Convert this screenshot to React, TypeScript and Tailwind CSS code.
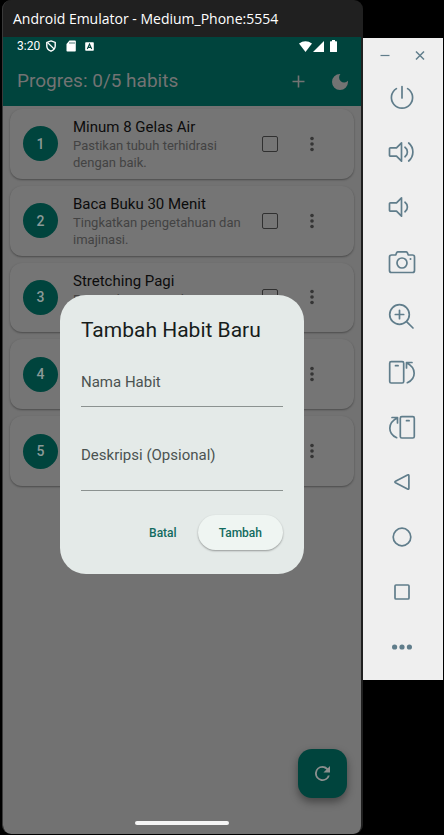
import type { ReactNode } from "react";

type Habit = { title?: string; description?: string };

const habits: Habit[] = [
  { title: "Minum 8 Gelas Air", description: "Pastikan tubuh terhidrasi dengan baik." },
  { title: "Baca Buku 30 Menit", description: "Tingkatkan pengetahuan dan imajinasi." },
  { title: "Stretching Pagi", description: "Regangkan otot selama" },
  {},
  {},
];

function StatusBar() {
  return (
    <div className="flex h-[18px] items-center pr-6 pl-[14px] text-xs text-white">
      <span className="w-[29px]">3:20</span>
      <svg className="h-3 w-[10px]" viewBox="0 0 10 12" fill="none" stroke="#fff" strokeWidth="1.4">
        <path d="M5 .9 9.2 2.4V6c0 2.500-1.700 4.200-4.200 5.200C2.500 10.200.8 8.500.8 6V2.400Z" />
        <path d="M1.500 2.500 8.200 9" strokeWidth="1.100" />
      </svg>
      <svg className="ml-[10px] h-3 w-[10px]" viewBox="0 0 10 12">
        <path d="M3.500 .5H9a.8.8 0 0 1 .8.8v9.400a.8.8 0 0 1-.8.8H1.300a.8.8 0 0 1-.8-.8V4Z" fill="#fff" />
        <path d="M4 2v2M6 2v2M8 2v2" stroke="#00443d" strokeWidth=".7" />
      </svg>
      <svg className="ml-[9px] h-[9px] w-[9px]" viewBox="0 0 9 9">
        <rect x=".2" y=".2" width="8.600" height="8.600" rx=".8" fill="#fff" />
        <path d="M2.300 7 4.500 2 6.700 7M3.200 5.400h2.600" fill="none" stroke="#00443d" strokeWidth="1.100" />
      </svg>
      <svg className="ml-auto h-[11px] w-[13px]" viewBox="0 0 13 11">
        <path d="M0 2.600C3.800-.7 9.200-.7 13 2.600L6.500 11Z" fill="#fff" />
      </svg>
      <svg className="ml-[1px] h-[11px] w-[11px]" viewBox="0 0 11 11">
        <path d="M11 0v11H0Z" fill="#fff" />
      </svg>
      <svg className="ml-[6px] h-3 w-[7px]" viewBox="0 0 7 12">
        <path d="M2 0h3v1.200h1.400a.6.6 0 0 1 .6.6v9.600a.6.6 0 0 1-.6.6H.6a.6.6 0 0 1-.6-.6V1.800a.6.6 0 0 1 .6-.6H2Z" fill="#fff" />
      </svg>
    </div>
  );
}

function AppBar() {
  return (
    <header className="flex h-[51px] items-center pt-[2px] pr-[11px] pl-[14px]">
      <h1 className="flex-1 text-[19px] text-[#737373]">Progres: 0/5 habits</h1>
      <button aria-label="Tambah habit" className="mr-5 flex h-6 w-6 items-center justify-center">
        <svg className="h-[13px] w-[13px]" viewBox="0 0 13 13" stroke="#737373" strokeWidth="1.600">
          <path d="M6.500 .5v12M.5 6.500h12" />
        </svg>
      </button>
      <button aria-label="Mode gelap" className="flex h-5 w-5 items-center justify-center">
        <svg className="h-4 w-4" viewBox="3 3 18 18" fill="#737373">
          <path d="M12 3a9 9 0 1 0 9 9c0-.46-.04-.92-.1-1.360A5.400 5.400 0 0 1 12.440 3.060 9.100 9.100 0 0 0 12 3Z" />
        </svg>
      </button>
    </header>
  );
}

function HabitCard({ habit, number }: { habit: Habit; number: number }) {
  return (
    <li className="flex items-center rounded-xl bg-[#757575] pr-[33px] pl-[13px] shadow-[0_1px_2px_rgba(0,0,0,0.35)]">
      <span className="flex h-[35px] w-[35px] shrink-0 items-center justify-center rounded-full bg-[#00443d] text-sm font-medium text-[#8b9a98]">
        {number}
      </span>
      <div className="ml-[15px] min-w-0 flex-1 self-start pt-2">
        {habit.title && <h2 className="text-[15px] leading-5 text-[#0c0c0c]">{habit.title}</h2>}
        {habit.description && <p className="text-[13px] leading-[17px] text-[#434343]">{habit.description}</p>}
      </div>
      <input
        type="checkbox"
        aria-label={`Habit ${number}`}
        className="mr-[25px] ml-3 h-4 w-4 shrink-0 appearance-none rounded-[2px] border border-[#303030]"
      />
      <button aria-label={`Menu habit ${number}`} className="flex h-6 w-[18px] shrink-0 items-center justify-center">
        <svg className="h-4 w-1" viewBox="0 0 4 16" fill="#353535">
          <circle cx="2" cy="2.500" r="1.800" />
          <circle cx="2" cy="8" r="1.800" />
          <circle cx="2" cy="13.500" r="1.800" />
        </svg>
      </button>
    </li>
  );
}

function AddHabitDialog() {
  return (
    <form
      role="dialog"
      aria-labelledby="dialog-title"
      className="absolute inset-x-[57px] top-[258px] rounded-[26px] bg-[#e4eae8] px-[21px] pt-[21px] pb-6"
    >
      <h2 id="dialog-title" className="text-[21px] leading-7 text-[#171d1b]">
        Tambah Habit Baru
      </h2>
      <div className="mt-[13px] grid">
        <label htmlFor="habit-name" className="col-start-1 row-start-1 self-center text-[15px] leading-5 text-[#4b5351]">
          Nama Habit
        </label>
        <input
          id="habit-name"
          className="col-start-1 row-start-1 h-[50px] w-full border-b border-[#8b9290] bg-transparent outline-none"
        />
      </div>
      <div className="mt-[14px] grid">
        <label htmlFor="habit-description" className="col-start-1 row-start-1 pt-6 text-[15px] leading-5 text-[#4b5351]">
          Deskripsi (Opsional)
        </label>
        <textarea
          id="habit-description"
          className="col-start-1 row-start-1 h-[70px] w-full resize-none border-b border-[#8b9290] bg-transparent outline-none"
        />
      </div>
      <div className="mt-6 flex justify-end gap-[9px] text-xs font-medium text-[#126b5f]">
        <button type="button" className="h-[35px] px-3">
          Batal
        </button>
        <button
          type="button"
          className="h-[35px] rounded-full bg-[#eff5f2] px-[21px] shadow-[0_1px_2px_rgba(0,0,0,0.35)]"
        >
          Tambah
        </button>
      </div>
    </form>
  );
}

function ToolButton({ label, children }: { label: string; children: ReactNode }) {
  return (
    <button aria-label={label} className="flex h-[55px] w-full items-center justify-center pr-[2px]">
      <svg
        className="h-7 w-7"
        viewBox="0 0 28 28"
        fill="none"
        stroke="#607d8b"
        strokeWidth="1.700"
        strokeLinejoin="round"
        strokeLinecap="round"
      >
        {children}
      </svg>
    </button>
  );
}

function EmulatorToolbar() {
  return (
    <aside className="mt-[38px] mr-px h-[642px] w-20 shrink-0 bg-[#efefef]">
      <div className="flex h-[31px] items-end justify-between pr-[15px] pl-[14px]">
        <button aria-label="Minimize" className="flex h-7 w-4 items-center justify-center">
          <svg className="h-3 w-3" viewBox="0 0 12 12" stroke="#607d8b" strokeWidth="1.200">
            <path d="M1.500 6.500h9" />
          </svg>
        </button>
        <button aria-label="Close" className="flex h-7 w-4 items-center justify-center">
          <svg className="h-3 w-3" viewBox="0 0 12 12" stroke="#607d8b" strokeWidth="1.500">
            <path d="m2 2.500 8 8m0-8-8 8" />
          </svg>
        </button>
      </div>
      <ToolButton label="Power">
        <path d="M14 3.500V15M8.400 5.600a10.600 10.600 0 1 0 11.200 0" />
      </ToolButton>
      <ToolButton label="Volume up">
        <path d="M2.500 9.800h6L13.500 4.800v18.400L8.500 18.200h-6a1 1 0 0 1-1-1v-6.400a1 1 0 0 1 1-1ZM17 9.200a6 6 0 0 1 0 9.600M20.700 5a11.800 11.800 0 0 1 0 18" />
      </ToolButton>
      <ToolButton label="Volume down">
        <path d="M2.500 9.800h6L13.500 4.800v18.400L8.500 18.200h-6a1 1 0 0 1-1-1v-6.400a1 1 0 0 1 1-1ZM17 9.200a6 6 0 0 1 0 9.600" />
      </ToolButton>
      <ToolButton label="Screenshot">
        <path d="M3.500 7h4.200l1-2.300c.3-.6.6-.9 1.200-.9h8.200c.6 0 .9.3 1.200.9l1 2.300h4.200a2 2 0 0 1 2 2v13.500a2 2 0 0 1-2 2h-21a2 2 0 0 1-2-2V9a2 2 0 0 1 2-2Z" />
        <circle cx="14" cy="15" r="5" />
        <path d="M22.500 11v.1" strokeWidth="2" />
      </ToolButton>
      <ToolButton label="Zoom">
        <circle cx="11.500" cy="11.500" r="9.800" />
        <path d="M11.500 7.300v8.400M7.300 11.500h8.400M18.800 18.800l6.200 6.200" />
      </ToolButton>
      <ToolButton label="Rotate left">
        <rect x="1.700" y="3.700" width="14" height="21.300" rx="1.500" />
        <path d="M7.500 7.700h2.600M18.500 10V4.500H24M19 5c9.500 5 9.500 15.500.3 19.700" />
      </ToolButton>
      <ToolButton label="Rotate right">
        <rect x="12.300" y="3.700" width="14" height="21.300" rx="1.500" />
        <path d="M18.500 7.700h2.600M9.500 10V4.500H4M9 5C-.5 10-.5 20.500 8.700 24.700" />
      </ToolButton>
      <ToolButton label="Back">
        <path d="m7.500 13.200 12-6.300c.8-.4 1.400 0 1.400.8v12.600c0 .8-.6 1.200-1.400.8l-12-6.300c-.8-.5-.8-1.100 0-1.600Z" />
      </ToolButton>
      <ToolButton label="Home">
        <circle cx="14" cy="14" r="8.800" />
      </ToolButton>
      <ToolButton label="Overview">
        <rect x="7" y="7" width="14" height="14" rx="1" />
      </ToolButton>
      <ToolButton label="More">
        <g fill="#607d8b" stroke="none">
          <circle cx="6.600" cy="14" r="2.600" />
          <circle cx="14" cy="14" r="2.600" />
          <circle cx="21.400" cy="14" r="2.600" />
        </g>
      </ToolButton>
    </aside>
  );
}

export default function App() {
  return (
    <div className="flex min-h-screen bg-black pb-px pl-[2px] font-[Roboto,sans-serif]">
      <main className="flex min-w-0 flex-1 flex-col overflow-hidden rounded-[9px] border-l border-[#3a3a3a] bg-[#202020]">
        <div className="flex h-[37px] items-center pl-[10px] font-['Open_Sans',sans-serif] text-sm whitespace-nowrap text-white">
          Android Emulator - Medium_Phone:5554
        </div>
        <div className="relative mr-[2px] flex flex-1 flex-col overflow-hidden rounded-b-lg bg-[#727272]">
          <div className="bg-[#00443d]">
            <StatusBar />
            <AppBar />
          </div>
          <ul className="mx-[7px] mt-[3px] grid h-[377px] auto-rows-fr gap-[7px]">
            {habits.map((habit, index) => (
              <HabitCard key={index} habit={habit} number={index + 1} />
            ))}
          </ul>
          <div className="mt-auto flex justify-end pr-[14px]">
            <button
              aria-label="Reset"
              className="flex h-[49px] w-[49px] items-center justify-center rounded-[14px] bg-[#00443d] shadow-[0_4px_8px_rgba(0,0,0,0.4)]"
            >
              <svg className="h-[15px] w-[15px]" viewBox="4 4 16 16" fill="#8b8f8e">
                <path d="M17.650 6.350A7.960 7.960 0 0 0 12 4a8 8 0 1 0 7.730 10h-2.080A6 6 0 1 1 12 6c1.660 0 3.140.69 4.220 1.780L13 11h7V4z" />
              </svg>
            </button>
          </div>
          <div className="mt-[23px] mb-[9px] h-1 w-[94px] self-center rounded-full bg-[#f5f5f5]" />
          <AddHabitDialog />
        </div>
      </main>
      <EmulatorToolbar />
    </div>
  );
}
